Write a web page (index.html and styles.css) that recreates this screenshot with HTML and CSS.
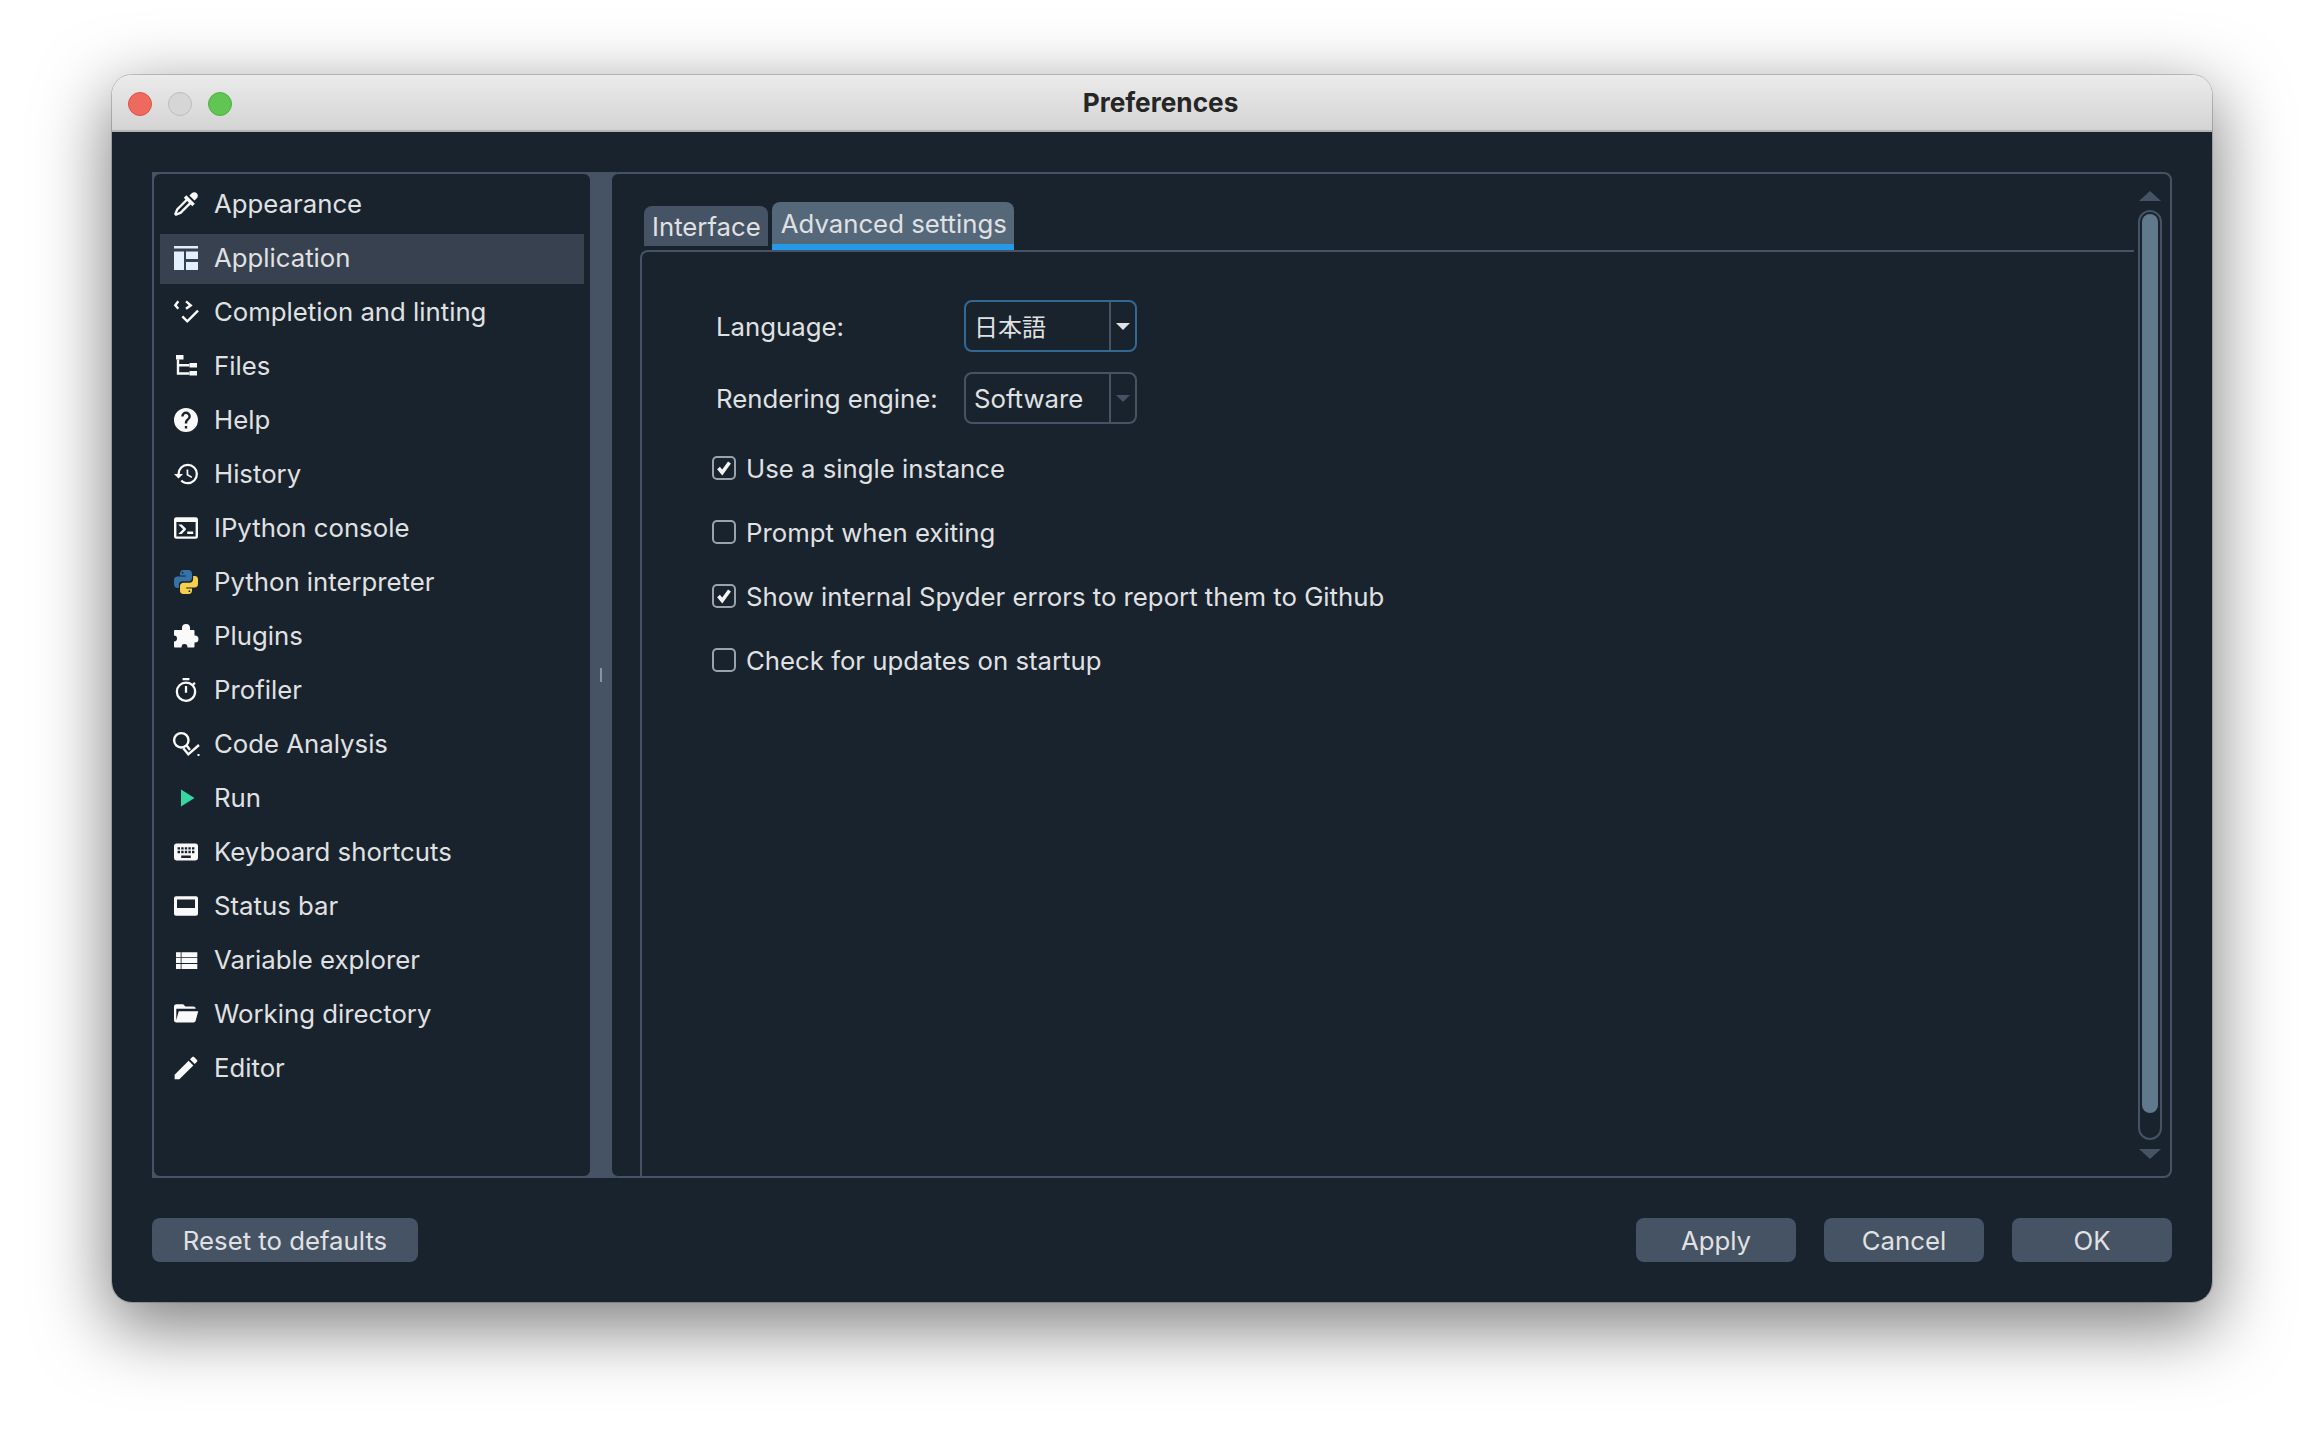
FILE: index.html
```html
<!DOCTYPE html>
<html lang="en">
<head>
    <meta charset="UTF-8">
    <title>Preferences</title>
    <link rel="stylesheet" href="styles.css">
</head>
<body>
    <div class="window">
        <div class="titlebar">
            <div class="lights">
                <span class="light red"></span>
                <span class="light grey"></span>
                <span class="light green"></span>
            </div>
            <div class="title">Preferences</div>
        </div>

        <div class="content">
            <div class="split">
                <div class="sidebar">
                    <ul class="pages">
                        <li class="page"><svg class="icon" viewBox="2 2 20 20"><path d="M19.35,11.72L17.22,13.85L15.81,12.43L8.1,20.14L3.5,22L2,20.5L3.86,15.9L11.57,8.19L10.15,6.78L12.28,4.65L19.35,11.72M16.76,3C17.93,1.83 19.83,1.83 21,3C22.17,4.17 22.17,6.07 21,7.24L19.08,9.16L14.84,4.92L16.76,3M5.56,17.03L4.5,19.5L6.97,18.44L14.4,11L13,9.6L5.56,17.03Z"/></svg>Appearance</li>
                        <li class="page selected"><svg class="icon" viewBox="0 0 24 24"><path fill="#e3f0fb" d="M0 0h24v2.500H0zM0 5.500h10V24H0zM12 5.500h12V13H12zM12 16h12v8H12z"/></svg>Application</li>
                        <li class="page"><svg class="icon" viewBox="0 0 24 24"><path class="line" d="M4.300 1.300 1.300 5.300 4.300 8.700M12 1.300l4.700 4L12 8.700M8.300 16.300l5 5L24 10.700"/></svg>Completion and linting</li>
                        <li class="page"><svg class="icon" viewBox="0 0 24 24"><path d="M2 1h7.500v4.500H2zM15.500 9H23v4.500h-7.500zM15.500 17H23v4.500h-7.500z"/><path class="line" d="M4 5.500v14h11.500M4 11.200h11.500"/></svg>Files</li>
                        <li class="page"><svg class="icon" viewBox="2 2 20 20"><path d="M15.07,11.25L14.17,12.17C13.45,12.89 13,13.5 13,15H11V14.5C11,13.39 11.45,12.39 12.17,11.67L13.41,10.41C13.78,10.05 14,9.55 14,9C14,7.89 13.1,7 12,7A2,2 0 0,0 10,9H8A4,4 0 0,1 12,5A4,4 0 0,1 16,9C16,9.88 15.64,10.67 15.07,11.25M13,19H11V17H13M12,2A10,10 0 0,0 2,12A10,10 0 0,0 12,22A10,10 0 0,0 22,12C22,6.47 17.5,2 12,2Z"/></svg>Help</li>
                        <li class="page"><svg class="icon" viewBox="1 1.500 21 21"><path d="M13.5,8H12V13L16.28,15.54L17,14.33L13.5,12.25V8M13,3A9,9 0 0,0 4,12H1L4.96,16.03L9,12H6A7,7 0 0,1 13,5A7,7 0 0,1 20,12A7,7 0 0,1 13,19C11.07,19 9.32,18.21 8.06,16.94L6.64,18.36C8.27,20 10.5,21 13,21A9,9 0 0,0 22,12A9,9 0 0,0 13,3"/></svg>History</li>
                        <li class="page"><svg class="icon" viewBox="2 2 20 20"><path d="M20,19V7H4V19H20M20,3A2,2 0 0,1 22,5V19A2,2 0 0,1 20,21H4A2,2 0 0,1 2,19V5A2,2 0 0,1 4,3H20M13,17V15H18V17H13M9.58,13L5.57,9H8.4L11.7,12.3C12.09,12.69 12.09,13.33 11.7,13.72L8.42,17H5.59L9.58,13Z"/></svg>IPython console</li>
                        <li class="page"><svg class="icon" viewBox="2 2.500 20 20"><path fill="#f7d04b" d="M19.14,7.5A2.86,2.86 0 0,1 22,10.36V14.14A2.86,2.86 0 0,1 19.14,17H12C12,17.39 12.32,17.96 12.71,17.96H17V19.64A2.86,2.86 0 0,1 14.14,22.5H9.86A2.86,2.86 0 0,1 7,19.64V15.89C7,14.31 8.28,13.04 9.86,13.04H15.11C16.69,13.04 17.96,11.76 17.96,10.18V7.5H19.14M14.86,19.29C14.46,19.29 14.14,19.59 14.14,20.18C14.14,20.77 14.46,20.89 14.86,20.89A0.71,0.71 0 0,0 15.57,20.18C15.57,19.59 15.25,19.29 14.86,19.29Z"/><path fill="#3572a5" d="M4.86,17.5C3.28,17.5 2,16.22 2,14.64V10.86C2,9.28 3.28,8 4.86,8H12C12,7.61 11.68,7.04 11.29,7.04H7V5.36C7,3.78 8.28,2.5 9.86,2.5H14.14C15.72,2.5 17,3.78 17,5.36V9.11C17,10.69 15.72,11.96 14.14,11.96H8.89C7.31,11.96 6.04,13.24 6.04,14.82V17.5H4.86M9.14,5.71C9.54,5.71 9.86,5.41 9.86,4.82C9.86,4.23 9.54,4.11 9.14,4.11C8.75,4.11 8.43,4.23 8.43,4.82C8.43,5.41 8.75,5.71 9.14,5.71Z"/></svg>Python interpreter</li>
                        <li class="page"><svg class="icon" viewBox="0 0 24 24"><path d="M1 6h7V4a4 4 0 0 1 8 0v2h3.500a1 1 0 0 1 1 1v4.500h.5a3.500 3.500 0 0 1 0 7h-.5v4a1 1 0 0 1-1 1h-6c0-2.500-1-3.500-3-3.500s-3 1-3 3.500H1a1 1 0 0 1-1-1v-5c2 0 3-1 3-3s-1-3-3-3V7a1 1 0 0 1 1-1z"/></svg>Plugins</li>
                        <li class="page"><svg class="icon" viewBox="1.500 1 21 21"><path d="M12,20A7,7 0 0,1 5,13A7,7 0 0,1 12,6A7,7 0 0,1 19,13A7,7 0 0,1 12,20M19.03,7.39L20.45,5.97C20,5.46 19.55,5 19.04,4.56L17.62,6C16.07,4.74 14.12,4 12,4A9,9 0 0,0 3,13A9,9 0 0,0 12,22C17,22 21,17.97 21,13C21,10.88 20.26,8.93 19.03,7.39M11,14H13V8H11M15,1H9V3H15V1Z"/></svg>Profiler</li>
                        <li class="page"><svg class="icon" viewBox="0 0 24 24"><circle class="line" cx="7.300" cy="8.300" r="7.200"/><path class="line" d="M12.700 13.500 16 18M9.300 16.300l5 6L25 13"/><path d="M23.500 22h2v2h-2z"/></svg>Code Analysis</li>
                        <li class="page"><svg class="icon" viewBox="0 0 24 24"><path fill="#35d8a0" d="M7 3.500 20.500 12 7 20.500z"/></svg>Run</li>
                        <li class="page"><svg class="icon" viewBox="2 2 20 20"><path fill-rule="evenodd" d="M19,10H17V8H19M19,13H17V11H19M16,10H14V8H16M16,13H14V11H16M16,17H8V15H16M7,10H5V8H7M7,13H5V11H7M8,11H10V13H8M8,8H10V10H8M11,11H13V13H11M11,8H13V10H11M20,5H4C2.89,5 2,5.89 2,7V17A2,2 0 0,0 4,19H20A2,2 0 0,0 22,17V7C22,5.89 21.1,5 20,5Z"/></svg>Keyboard shortcuts</li>
                        <li class="page"><svg class="icon" viewBox="0 0 24 24"><path fill-rule="evenodd" d="M2 2.300h20a2 2 0 0 1 2 2v15.400a2 2 0 0 1-2 2H2a2 2 0 0 1-2-2V4.300a2 2 0 0 1 2-2zM3 5.500V14h18V5.500z"/></svg>Status bar</li>
                        <li class="page"><svg class="icon" viewBox="0 0 24 24"><path d="M2 4.300h4.700v5H2zM7.500 4.300h15.800v5H7.500zM2 10.100h4.700v5H2zM7.500 10.100h15.800v5H7.500zM2 15.900h4.700V21H2zM7.500 15.900h15.800V21H7.500z"/></svg>Variable explorer</li>
                        <li class="page"><svg class="icon" viewBox="2 2 21 21"><path d="M19,20H4C2.89,20 2,19.1 2,18V6C2,4.89 2.89,4 4,4H10L12,6H19A2,2 0 0,1 21,8H21L4,8V18L6.14,10H23.21L20.93,18.5C20.7,19.37 19.92,20 19,20Z"/></svg>Working directory</li>
                        <li class="page"><svg class="icon" viewBox="2.500 2.500 19 19"><path d="M20.71,7.04C21.1,6.65 21.1,6 20.71,5.63L18.37,3.29C18,2.9 17.35,2.9 16.96,3.29L15.12,5.12L18.87,8.87M3,17.25V21H6.75L17.81,9.93L14.06,6.18L3,17.25Z"/></svg>Editor</li>
                    </ul>
                    <div class="splitter"><span class="handle"></span></div>
                </div>

                <div class="panel">
                    <div class="panel-main">
                        <div class="tabs">
                            <div class="tab">Interface</div>
                            <div class="tab active">Advanced settings</div>
                        </div>
                        <div class="pane">
                            <div class="form">
                                <label class="form-label">Language:</label>
                                <div class="combo focused">
                                    <span class="combo-text cjk">日本語</span>
                                    <span class="combo-arrow"></span>
                                </div>
                                <label class="form-label">Rendering engine:</label>
                                <div class="combo disabled">
                                    <span class="combo-text">Software</span>
                                    <span class="combo-arrow"></span>
                                </div>
                            </div>
                            <div class="checks">
                                <div class="check-row"><span class="checkbox"><svg viewBox="0 0 20 20"><path d="M4.500 10 8.200 14.500 15.500 4.500"/></svg></span>Use a single instance</div>
                                <div class="check-row"><span class="checkbox"></span>Prompt when exiting</div>
                                <div class="check-row"><span class="checkbox"><svg viewBox="0 0 20 20"><path d="M4.500 10 8.200 14.500 15.500 4.500"/></svg></span>Show internal Spyder errors to report them to Github</div>
                                <div class="check-row"><span class="checkbox"></span>Check for updates on startup</div>
                            </div>
                        </div>
                    </div>
                    <div class="scrollbar">
                        <span class="scroll-up"></span>
                        <div class="scroll-track"><div class="scroll-thumb"></div></div>
                        <span class="scroll-down"></span>
                    </div>
                </div>
            </div>

            <div class="footer">
                <button class="btn reset">Reset to defaults</button>
                <button class="btn push">Apply</button>
                <button class="btn">Cancel</button>
                <button class="btn">OK</button>
            </div>
        </div>
    </div>
</body>
</html>
```

FILE: styles.css
```css
html, body {
    margin: 0;
    height: 100%;
    overflow: hidden;
}
body {
    background-color: #fff;
    box-sizing: border-box;
    padding: 75px 112px 0;
    font-family: Inter, "Noto Sans CJK JP", sans-serif;
    font-size: 25.75px;
    color: #e0e1e3;
}

/* window frame */
.window {
    width: 2100px;
    height: 1227px;
    border-radius: 20px;
    overflow: hidden;
    display: flex;
    flex-direction: column;
    box-shadow: 0 22px 70px 4px rgba(0, 0, 0, 0.5), 0 0 0 1px rgba(0, 0, 0, 0.18);
}
.titlebar {
    height: 57px;
    flex: none;
    box-sizing: border-box;
    display: flex;
    align-items: center;
    padding: 3px 0 0 16px;
    position: relative;
    background: linear-gradient(#ebebeb, #d4d4d4);
    border-bottom: 2px solid #b5b5b5;
}
.lights {
    display: flex;
    gap: 16px;
}
.light {
    width: 24px;
    height: 24px;
    box-sizing: border-box;
    border-radius: 50%;
    border: 1px solid;
}
.red { background-color: #ee6a5f; border-color: #d9544a; }
.grey { background-color: #d6d6d6; border-color: #bcbcbc; }
.green { background-color: #61c554; border-color: #52ad46; }
.title {
    position: absolute;
    left: 0;
    right: 3px;
    margin-top: -3px;
    text-align: center;
    font-weight: 700;
    font-size: 26.2px;
    color: #262626;
}

.content {
    flex: 1;
    background-color: #19232d;
    padding: 40px;
    display: flex;
    flex-direction: column;
    gap: 40px;
}
.split {
    flex: 1;
    display: flex;
}

/* left list of pages */
.sidebar {
    width: 464px;
    flex: none;
    display: flex;
    box-sizing: border-box;
    background-color: #455364;
    padding: 2px 0 2px 2px;
}
.pages {
    list-style: none;
    margin: 0;
    padding: 6px 6px 0;
    width: 424px;
    flex: none;
    background-color: #19232d;
    border-radius: 6px;
    display: flex;
    flex-direction: column;
    gap: 4px;
}
.page {
    height: 50px;
    box-sizing: border-box;
    display: flex;
    align-items: center;
    gap: 16px;
    padding: 0 0 4px 14px;
}
.page.selected {
    background-color: #37414f;
}
.icon {
    width: 24px;
    height: 24px;
    flex: none;
    margin-top: 2px;
    overflow: visible;
    fill: #fafafa;
}
.line {
    fill: none;
    stroke: #fafafa;
    stroke-width: 2.4;
}
.splitter {
    flex: 1;
    display: flex;
    padding-left: 10px;
    padding-right: 6px;
    align-items: center;
}
.handle {
    width: 2px;
    height: 14px;
    background-color: #8794a3;
}

/* right panel */
.panel {
    flex: 1;
    margin-left: -6px;
    display: flex;
    gap: 4px;
    box-sizing: border-box;
    background-color: #19232d;
    border: 2px solid #455364;
    border-radius: 8px;
    padding: 0 8px 0 28px;
}
.panel-main {
    flex: 1;
    display: flex;
    flex-direction: column;
    padding-top: 28px;
}
.tabs {
    display: flex;
    gap: 4px;
    padding-left: 4px;
    align-items: flex-start;
}
.tab {
    height: 40px;
    margin-top: 4px;
    padding: 0 7px 0 8px;
    display: flex;
    align-items: center;
    background-color: #455364;
    border-radius: 8px 8px 0 0;
}
.tab.active {
    height: 42px;
    margin-top: 0;
    padding: 0 7px 0 9px;
    background-color: #54687a;
    border-bottom: 6px solid #259ae9;
}
.pane {
    flex: 1;
    border-top: 2px solid #455364;
    border-left: 2px solid #455364;
    border-top-left-radius: 8px;
    padding: 48px 0 0 74px;
}
.form {
    display: grid;
    grid-template-columns: 248px 173px;
    grid-auto-rows: 52px;
    row-gap: 20px;
    align-items: center;
}
.combo {
    height: 52px;
    box-sizing: border-box;
    display: flex;
    border: 2px solid #455364;
    border-radius: 8px;
}
.combo.focused {
    border-color: #346792;
}
.combo-text {
    flex: 1;
    display: flex;
    align-items: center;
    padding-left: 8px;
    border-right: 2px solid #455364;
}
.cjk {
    font-size: 24px;
    padding-bottom: 2px;
}
.combo-arrow {
    width: 24px;
    flex: none;
    display: flex;
    align-items: center;
    justify-content: center;
}
.combo-arrow::after {
    content: "";
    border-left: 7px solid transparent;
    border-right: 7px solid transparent;
    border-top: 7px solid #e0e1e3;
}
.combo.disabled .combo-arrow::after {
    border-top-color: #455364;
}

/* check boxes */
.checks {
    margin: 32px 0 0 -4px;
    display: flex;
    flex-direction: column;
    gap: 40px;
}
.check-row {
    height: 24px;
    display: flex;
    align-items: center;
    gap: 10px;
}
.checkbox {
    width: 24px;
    height: 24px;
    flex: none;
    box-sizing: border-box;
    border: 2px solid #9aa3ad;
    border-radius: 5px;
}
.checkbox svg {
    display: block;
    width: 20px;
    height: 20px;
    fill: none;
    stroke: #f4f4f4;
    stroke-width: 3.6;
}

/* scroll bar */
.scrollbar {
    width: 24px;
    flex: none;
    display: flex;
    flex-direction: column;
    align-items: center;
    padding: 17px 0;
    gap: 9px;
}
.scroll-up {
    border-left: 11px solid transparent;
    border-right: 11px solid transparent;
    border-bottom: 10px solid #455364;
}
.scroll-down {
    border-left: 11px solid transparent;
    border-right: 11px solid transparent;
    border-top: 10px solid #455364;
}
.scroll-track {
    flex: 1;
    width: 24px;
    box-sizing: border-box;
    border: 2px solid #455364;
    border-radius: 12px;
    padding: 2px;
    display: flex;
    flex-direction: column;
}
.scroll-thumb {
    height: 899px;
    background-color: #60798b;
    border-radius: 8px;
}

/* bottom buttons */
.footer {
    height: 44px;
    flex: none;
    display: flex;
    gap: 28px;
}
.btn {
    width: 160px;
    padding: 0;
    border: 0;
    border-radius: 8px;
    background-color: #455364;
    color: #e0e1e3;
    font-family: Inter, sans-serif;
    font-size: 25.75px;
}
.btn.reset {
    width: 266px;
}
.btn.push {
    margin-left: auto;
}
```
